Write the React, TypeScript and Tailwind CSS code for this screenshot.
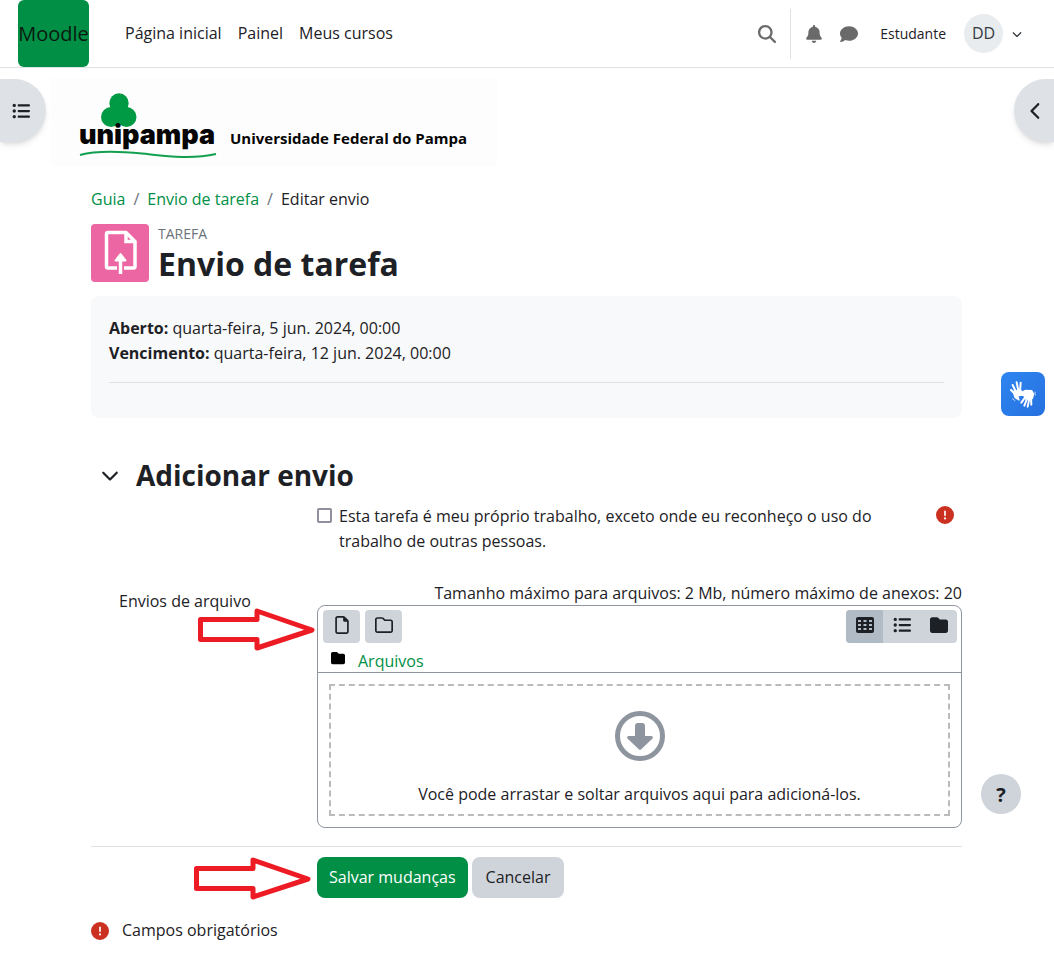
import type { ReactNode } from "react";
import {
  FaBell,
  FaChevronDown,
  FaChevronLeft,
  FaCircleExclamation,
  FaComment,
  FaFolder,
  FaListUl,
  FaMagnifyingGlass,
  FaRegFile,
  FaRegFolder,
} from "react-icons/fa6";

const Navbar = () => (
  <header className="flex h-[68px] items-center border-b border-[#dee2e6] bg-white pl-[18px] pr-8">
    <a href="#" className="flex h-[67px] w-[71px] items-center justify-center rounded-md bg-[#008f45] text-[20px] text-[#0b1a10]">
      Moodle
    </a>
    <nav className="ml-9 flex gap-4">
      <a href="#">Página inicial</a>
      <a href="#">Painel</a>
      <a href="#">Meus cursos</a>
    </nav>

    <div className="ml-auto flex items-center text-[#6a6a6a]">
      <button aria-label="Buscar" className="mr-[14px]">
        <FaMagnifyingGlass size={18} />
      </button>
      <div className="h-[50px] border-l border-[#dee2e6]" />
      <button aria-label="Notificações" className="ml-[14px]">
        <FaBell size={18} />
      </button>
      <button aria-label="Mensagens" className="ml-[17px]">
        <FaComment size={18} />
      </button>
      <span className="ml-[22px] text-[14px] text-[#1d2125]">Estudante</span>
      <button aria-label="Menu do usuário" className="ml-[18px] flex items-center gap-[9px] text-[#343a40]">
        <span className="flex size-[39px] items-center justify-center rounded-full bg-[#e9ecef] text-[16px]">DD</span>
        <FaChevronDown size={10} />
      </button>
    </div>
  </header>
);

const Logo = () => (
  <div className="-ml-10 mt-[10px] h-[88px] w-[446px] bg-[#fdfdfd]">
    <svg viewBox="51 78 446 88" className="h-full w-full" role="img" aria-label="Universidade Federal do Pampa">
      <g fill="#009a44">
        <circle cx="119" cy="103" r="9.7" />
        <circle cx="111" cy="117" r="10" />
        <circle cx="126.500" cy="117" r="10" />
        <path d="M112 106h14v19h-14z" />
      </g>
      <text x="79" y="144" fontSize="27" fontWeight="900" fill="#050505" fontFamily="Inter, sans-serif">
        unipampa
      </text>
      <path d="M80 155C98 150 122 151.500 142 153.500S190 160 216 154" fill="none" stroke="#12a050" strokeWidth="2" />
      <text x="230" y="144" fontSize="15" fontWeight="700" fill="#050505" fontFamily="Open Sans, sans-serif">
        Universidade Federal do Pampa
      </text>
    </svg>
  </div>
);

const RedArrow = () => (
  <svg width="118" height="44" viewBox="0 0 118 44" className="block" aria-hidden="true">
    <path d="M2.500 11.500H59V3L114 22L59 40V31.500H2.500Z" fill="#fff" stroke="#ed1c24" strokeWidth="5" strokeLinejoin="round" />
  </svg>
);

const GridIcon = () => (
  <svg width="18" height="16" viewBox="0 0 18 16" aria-hidden="true">
    <rect width="18" height="16" rx="2" fill="currentColor" />
    <g fill="#b0bbc5">
      <path d="M2 3h3v2H2zM7.500 3h3v2h-3zM13 3h3v2h-3z" />
      <path d="M2 7h3v2H2zM7.500 7h3v2h-3zM13 7h3v2h-3z" />
      <path d="M2 11h3v2H2zM7.500 11h3v2h-3zM13 11h3v2h-3z" />
    </g>
  </svg>
);

const HandsIcon = () => (
  <svg width="44" height="44" viewBox="0 0 132 132" fill="none" stroke="#fff" strokeLinecap="round" aria-hidden="true">
    {/* raised hand */}
    <path d="M42 66L30 54M45 60L35 39M52 56L47 31M57 60L59 32" strokeWidth="6" />
    <path d="M36 58L58 54L68 66L50 72L54 84L42 76Z" fill="#fff" strokeWidth="4" strokeLinejoin="round" />
    {/* lowered hand */}
    <path d="M74 74L61 92M79 78L70 101M85 80L80 104M90 76L91 98" strokeWidth="6" />
    <path d="M52 64L74 55L92 56L98 66L94 80L76 82L68 70L53 70Z" fill="#fff" strokeWidth="4" strokeLinejoin="round" />
    <path d="M102 60L103 69M34 80L42 86" strokeWidth="2" />
  </svg>
);

const Required = () => <FaCircleExclamation size={18} className="shrink-0 text-[#ca3120]" title="Necessário" />;

const ToolButton = ({ label, className = "", children }: { label: string; className?: string; children: ReactNode }) => (
  <button type="button" aria-label={label} className={`flex h-[33px] w-[37px] items-center justify-center pb-1 ${className}`}>
    {children}
  </button>
);

const FileManager = () => (
  <div className="rounded-lg border border-[#8f959e]">
    <div className="flex px-1 pt-1">
      <div className="flex gap-[5px] pl-px">
        <ToolButton label="Adicionar arquivo" className="rounded-sm bg-[#ced4da]">
          <FaRegFile size={18} />
        </ToolButton>
        <ToolButton label="Criar pasta" className="rounded-sm bg-[#ced4da]">
          <FaRegFolder size={18} />
        </ToolButton>
      </div>
      <div className="ml-auto flex overflow-hidden rounded-sm bg-[#ced4da]">
        <ToolButton label="Exibir como ícones" className="bg-[#b0bbc5]">
          <GridIcon />
        </ToolButton>
        <ToolButton label="Exibir como lista">
          <FaListUl size={18} />
        </ToolButton>
        <ToolButton label="Exibir como árvore">
          <FaFolder size={18} />
        </ToolButton>
      </div>
    </div>
    <div className="flex h-[30px] items-center gap-[13px] border-b border-[#8f959e] pl-[13px]">
      <FaFolder size={14} className="text-black" />
      <a href="#" className="pt-2 text-[#008f45]">Arquivos</a>
    </div>
    <div className="p-[11px]">
      <div className="flex h-[132px] flex-col items-center border-2 border-dashed border-[#bbb] pt-6">
        <svg width="52" height="52" viewBox="0 0 52 52" aria-hidden="true">
          <circle cx="26" cy="26" r="22.500" fill="none" stroke="#8f959e" strokeWidth="5" />
          <path d="M24 13h4a3 3 0 0 1 3 3V26h6c2 0 2.500 1.500 1.300 2.700L27.500 39a2 2 0 0 1-3 0L13.700 28.700C12.500 27.500 13 26 15 26h6V16a3 3 0 0 1 3-3z" fill="#8f959e" />
        </svg>
        <p className="mt-5">Você pode arrastar e soltar arquivos aqui para adicioná-los.</p>
      </div>
    </div>
  </div>
);

export default function App() {
  return (
    <div className="relative min-h-screen bg-white pb-[10px] font-['Open_Sans',sans-serif] text-[16px] leading-[25px] text-[#1d2125]">
      <Navbar />

      {/* Drawer toggles */}
      <button
        aria-label="Abrir índice do curso"
        className="absolute left-0 top-[79px] flex h-[63px] w-[46px] items-center rounded-r-full bg-[#dee2e6] pl-3 shadow-md"
      >
        <FaListUl size={18} />
      </button>
      <button
        aria-label="Abrir gaveta de blocos"
        className="absolute right-0 top-[79px] flex h-[63px] w-10 items-center rounded-l-full bg-[#dee2e6] pl-[13px] shadow-md"
      >
        <FaChevronLeft size={18} />
      </button>

      <main className="ml-[91px] mr-[92px]">
        <Logo />

        <nav aria-label="Navegação" className="mt-[21px] flex gap-2">
          <a href="#" className="text-[#008f45]">Guia</a>
          <span className="text-[#6a737b]">/</span>
          <a href="#" className="text-[#008f45]">Envio de tarefa</a>
          <span className="text-[#6a737b]">/</span>
          <span>Editar envio</span>
        </nav>

        <div className="mt-3 flex gap-[9px]">
          <div className="flex size-[58px] items-center justify-center rounded bg-[#eb66a2]">
            <svg width="34" height="46" viewBox="0 0 34 46" fill="none" stroke="#fff" strokeWidth="3.500" aria-hidden="true">
              <path d="M14 38H5Q3.500 38 3.500 36.500V4Q3.500 2.500 5 2.500H23L32 11.500V36.500Q32 38 30.500 38H21" />
              <path d="M23 3V11.500H31.500" />
              <path d="M17.500 44V30" />
              <path d="M12.500 30.500L17.500 24L22.500 30.500Z" fill="#fff" strokeWidth="2" strokeLinejoin="round" />
            </svg>
          </div>
          <div>
            <div className="text-[14px] leading-[20px] text-[#6a737b]">TAREFA</div>
            <h1 className="text-[32px] leading-[40px] font-bold">Envio de tarefa</h1>
          </div>
        </div>

        <section className="mt-3 h-[122px] rounded-lg bg-[#f8f9fa] px-[18px] pt-5">
          <p><strong>Aberto:</strong> quarta-feira, 5 jun. 2024, 00:00</p>
          <p><strong>Vencimento:</strong> quarta-feira, 12 jun. 2024, 00:00</p>
          <hr className="mt-4 border-[#dee2e6]" />
        </section>

        <form onSubmit={(e) => e.preventDefault()}>
          <div className="mt-[37px] flex items-center gap-[17px] pl-[10px]">
            <button type="button" aria-label="Recolher Adicionar envio">
              <FaChevronDown size={18} />
            </button>
            <h2 className="text-[28px] leading-[40px] font-bold">Adicionar envio</h2>
          </div>

          <div className="mt-[9px] flex items-start pl-[226px]">
            <input id="statement" type="checkbox" className="mt-1 size-[15px] shrink-0 appearance-none rounded-xs border-2 border-[#8f8f9d] bg-white" />
            <label htmlFor="statement" className="ml-[7px] mr-auto max-w-[540px]">
              Esta tarefa é meu próprio trabalho, exceto onde eu reconheço o uso do trabalho de outras pessoas.
            </label>
            <div className="mr-2 mt-[2px]">
              <Required />
            </div>
          </div>

          <div className="relative mt-[27px] flex">
            <div className="w-[226px] shrink-0 pl-7 pt-2">Envios de arquivo</div>
            <div className="min-w-0 grow">
              <p className="text-right leading-[24px]">Tamanho máximo para arquivos: 2 Mb, número máximo de anexos: 20</p>
              <FileManager />
            </div>
            <div className="absolute left-[107px] top-[27px]">
              <RedArrow />
            </div>
          </div>

          <div className="relative mt-[18px] flex gap-1 border-t border-[#dee2e6] pl-[226px] pt-[10px]">
            <button className="h-[41px] rounded-lg bg-[#008f45] px-3 text-white">Salvar mudanças</button>
            <button type="button" className="h-[41px] rounded-lg bg-[#ced4da] px-[14px]">Cancelar</button>
            <div className="absolute left-[103px] top-[10px]">
              <RedArrow />
            </div>
          </div>

          <div className="mt-5 flex items-center gap-[13px]">
            <Required />
            <span>Campos obrigatórios</span>
          </div>
        </form>
      </main>

      {/* Floating widgets */}
      <button
        aria-label="Acessível em Libras"
        className="absolute right-[9px] top-[372px] size-11 rounded-lg bg-linear-to-br from-[#2f86f0] to-[#2670e0]"
      >
        <HandsIcon />
      </button>
      <button
        aria-label="Ajuda"
        className="absolute right-[33px] top-[774px] size-10 rounded-full bg-[#ced4da] text-[20px] font-bold"
      >
        ?
      </button>
    </div>
  );
}
